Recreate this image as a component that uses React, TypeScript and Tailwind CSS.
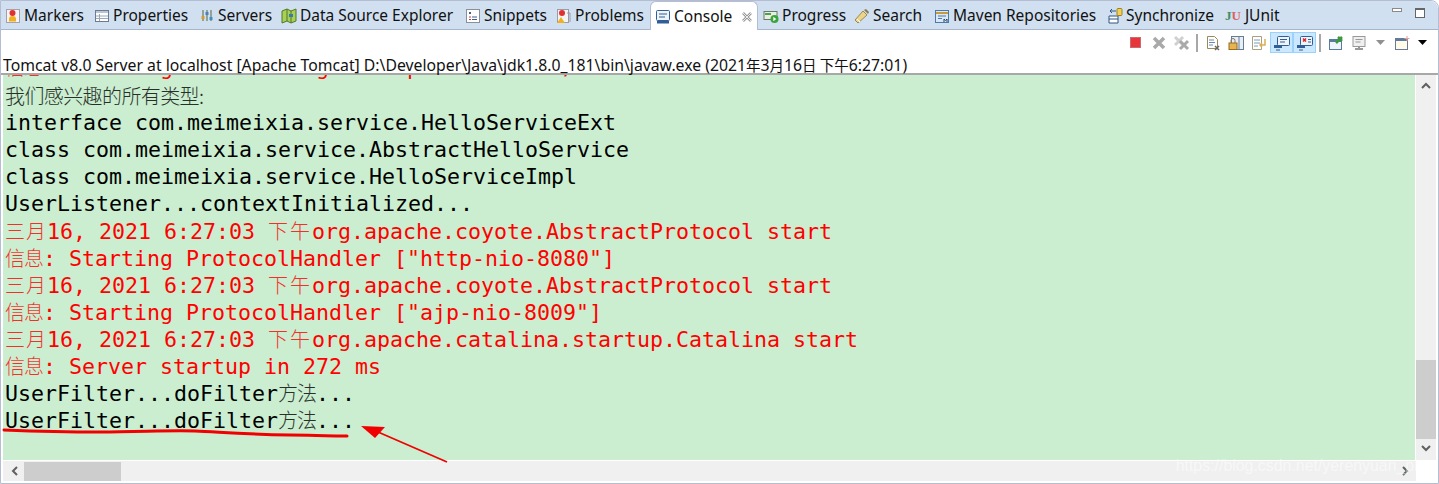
import React from "react";

const Ic = ({ children, w = 16 }: { children: React.ReactNode; w?: number }) => (
  <svg width={w} height="16" viewBox={`0 0 ${w} 16`} className="shrink-0">{children}</svg>
);

const icons: Record<string, React.ReactNode> = {
  markers: <Ic><rect x="1.5" y="1.5" width="13" height="13" fill="#f4f4f4" stroke="#a8a0a8"/><circle cx="7.500" cy="5" r="3" fill="#e03030"/><path d="M4 13.500v-2.500a3.500 3 0 017 0v2.500z" fill="#f0b020"/></Ic>,
  properties: <Ic><rect x="1.5" y="2.5" width="13" height="11" fill="#fff" stroke="#6d7a92"/><path d="M2 3h12v2H2z" fill="#b9c6d8"/><path d="M5.500 6v7M2 8h12M2 10.500h12" stroke="#9aa6ba"/></Ic>,
  servers: <Ic><path d="M4 2v11M8 2v11M12 2v11" stroke="#6b7a5c" strokeWidth="1.200"/><rect x="2.500" y="8" width="3" height="3" fill="#d89a2a"/><rect x="6.500" y="4" width="3" height="3" fill="#4a80c0"/><rect x="10.500" y="9" width="3" height="3" fill="#3d8fc0"/></Ic>,
  dse: <Ic><path d="M1 3l5-2 4 2 5-2v12l-5 2-4-2-5 2z" fill="#a6d155" stroke="#55752c"/><path d="M6 1v12M10 3v12" stroke="#55752c"/><rect x="8" y="6" width="4" height="3" fill="#3a78b8"/></Ic>,
  snippets: <Ic><rect x="1.5" y="1.5" width="13" height="13" fill="#fff" stroke="#8a9098"/><path d="M4 4h2v2H4z" fill="#406090"/><path d="M7 9h5M7 11.500h5" stroke="#406090"/><path d="M4 9h2M4 11.500h2" stroke="#c04040"/></Ic>,
  problems: <Ic><rect x="1.5" y="1.5" width="11" height="13" fill="#f3f3f3" stroke="#9a9aa8"/><circle cx="6" cy="5" r="3" fill="#e03030"/><path d="M1 15l4-6 4 6z" fill="#f0b020"/><path d="M11 5h3v9" stroke="#9a9aa8" fill="none"/></Ic>,
  console: <Ic><rect x="1.5" y="1.5" width="13" height="10" rx="1" fill="#eef4fa" stroke="#2f5f96"/><path d="M4 5h8M4 8h6" stroke="#2f5f96"/><rect x="2" y="12" width="12" height="2.500" fill="#2f5f96"/></Ic>,
  progress: <Ic><rect x="1" y="3.5" width="13" height="8" fill="#e8eee0" stroke="#6a7a6a"/><rect x="2" y="5" width="6" height="2" fill="#50a050"/><circle cx="11.500" cy="11" r="4" fill="#3aa53a"/><path d="M10.300 8.800l3 2.200-3 2.200z" fill="#fff"/></Ic>,
  search: <Ic><path d="M1 12l8-9 4 4-9 8z" fill="#ecd58a" stroke="#9a8a50"/><path d="M10 2l4 4 1-2-3-3z" fill="#8a7a50"/><path d="M3 11l3 3" stroke="#fff"/></Ic>,
  maven: <Ic><rect x="1.5" y="2.5" width="13" height="12" fill="#d9e8f4" stroke="#4d7aa8"/><path d="M2 5h12" stroke="#c89a3a" strokeWidth="2"/><path d="M4 8h8M4 10.500h4" stroke="#4d7aa8"/><path d="M10 14v-3l1.500 1.500L13 11v3" stroke="#23456b" fill="none"/></Ic>,
  sync: <Ic><path d="M2 8h9v7H2zM2 11h9" fill="#fff" stroke="#2f557f"/><path d="M9 3H3M5 1L3 3l2 2" stroke="#2f557f" fill="none"/><rect x="10" y="0.500" width="5" height="7" rx="1" fill="#f2cf55" stroke="#a08020"/></Ic>,
};

const tabs: [string, string, number][] = [
  ["Markers", "markers", 89],
  ["Properties", "properties", 105],
  ["Servers", "servers", 82],
  ["Data Source Explorer", "dse", 184],
  ["Snippets", "snippets", 91],
  ["Problems", "problems", 95],
];
const tabs2: [string, string, number][] = [
  ["Progress", "progress", 91],
  ["Search", "search", 80],
  ["Maven Repositories", "maven", 173],
  ["Synchronize", "sync", 118],
];

const Tab = ({ t }: { t: [string, string, number] }) => (
  <div className="flex items-center gap-[3px] h-[29px] pt-[1px]" style={{ width: t[2] }}>
    {icons[t[1]]}
    <span className="whitespace-nowrap">{t[0]}</span>
  </div>
);

const Tool = ({ children, on, narrow }: { children: React.ReactNode; on?: boolean; narrow?: boolean }) => (
  <div className={`${narrow ? "w-[21px]" : "w-[23px]"} h-[21px] flex items-center justify-center ${on ? "bg-[#cce8ff] border border-[#99d1ff]" : ""}`}>{children}</div>
);
const Sep = () => <div className="w-[2px] h-[18px] bg-[#a8a8a8] mx-[3px]" />;

const Cjk = ({ children, className }: { children: React.ReactNode; className: string }) => (
  <span className={`[font-family:'Noto_Sans_CJK_SC',sans-serif] font-light text-[20px] opacity-80 ${className}`}>{children}</span>
);
const Sanyue = () => <Cjk className="tracking-[1px]">三月</Cjk>;
const Xiawu = () => <Cjk className="tracking-[2px]">下午</Cjk>;
const Xinxi = () => <Cjk className="tracking-[-1px]">信息</Cjk>;
const Fangfa = () => <Cjk className="tracking-[-1px]">方法</Cjk>;

const L = ({ children, red }: { children: React.ReactNode; red?: boolean }) => (
  <div className={`h-[27px] leading-[27px] whitespace-pre ${red ? "text-[#ff0000]" : "text-black"}`}>{children}</div>
);

export default function App() {
  return (
    <div className="relative w-[1439px] h-[484px] overflow-hidden bg-white [font-family:'Noto_Sans',sans-serif] text-[15.500px] text-[#111]">
      <div className="h-[484px] flex flex-col rounded-tr-[8px] border border-[#b4bdd2]">
        <div className="relative h-[29px] shrink-0 bg-[#d1e0f0] border-b border-[#a8b6cc] flex items-start pl-[4px] rounded-tr-[8px]">
          {tabs.map((t) => <Tab key={t[0]} t={t} />)}
          <div className="w-[108px] h-[29px] -ml-[1px] mr-[5px] pt-[1px] bg-white rounded-t-[6px] border border-b-0 border-[#b4bdd2] flex items-center pl-[4px] gap-[3px]">
            {icons.console}
            <span>Console</span>
            <svg width="12" height="12" viewBox="0 0 12 12" className="ml-[6px]"><path d="M2 2l8 8M10 2l-8 8" stroke="#9a9a9a" strokeWidth="2.500" fill="none"/><path d="M2 2l8 8M10 2l-8 8" stroke="#fff" strokeWidth="0.800"/></svg>
          </div>
          {tabs2.map((t) => <Tab key={t[0]} t={t} />)}
          <div className="flex items-center gap-[4px] h-[29px] pt-[1px] w-[100px]">
            <span className="[font-family:'Liberation_Serif',serif] font-bold text-[13px]"><span className="text-[#3f8f5f]">J</span><span className="text-[#e06060]">U</span></span>
            <span>JUnit</span>
          </div>
          <div className="ml-auto flex items-center gap-[13px] h-[24px] pr-[13px]">
            <div className="w-[10px] h-[4px] -mt-[6px] border border-[#8a8a8a] bg-white" />
            <div className="w-[10px] h-[10px] border border-[#666] border-t-2 bg-white" />
          </div>
        </div>

        <div className="h-[43px] shrink-0 relative flex flex-col">
          <div className="flex items-center justify-end h-[21px] mt-[2px] pr-[5px]">
            <Tool><div className="w-[11px] h-[11px] bg-[#e8353c] border border-[#c86a70]" /></Tool>
            <Tool><svg width="14" height="14" viewBox="0 0 14 14"><path d="M2 2l10 10M12 2L2 12" stroke="#a9a9a9" strokeWidth="3.500"/></svg></Tool>
            <Tool><svg width="16" height="16" viewBox="0 0 16 16"><path d="M1 2l8 8M9 2l-8 8" stroke="#d0d0d0" strokeWidth="3"/><path d="M6 6l8 8M14 6l-8 8" stroke="#a9a9a9" strokeWidth="3"/></svg></Tool>
            <Sep />
            <Tool><svg width="16" height="16" viewBox="0 0 16 16"><path d="M2.500 1.500h7l3 3v9h-10z" fill="#fff" stroke="#9a8a5a"/><path d="M4 5h5M4 7.500h6M4 10h4" stroke="#6a8ab0"/><path d="M10 11l4 4M14 11l-4 4" stroke="#666" strokeWidth="1.500"/></svg></Tool>
            <Tool><svg width="16" height="16" viewBox="0 0 16 16"><rect x="3.500" y="1.500" width="12" height="13" fill="#e6eef6" stroke="#6a7a92"/><path d="M11 2v12" stroke="#6a7a92"/><rect x="1" y="8" width="8" height="6.500" fill="#e8b450" stroke="#9a6a20"/><path d="M3 8V5.500a2 2 0 014 0V8" fill="none" stroke="#8a7a60"/></svg></Tool>
            <Tool><svg width="16" height="16" viewBox="0 0 16 16"><path d="M1.500 1.500h9v13h-9z" fill="#fff" stroke="#a8a080"/><path d="M3 5h6M3 8h6M3 11h4" stroke="#7a9aba"/><path d="M14 4v6H9M11 8l-2 2 2 2" stroke="#d8b050" strokeWidth="1.500" fill="none"/></svg></Tool>
            <Tool on><svg width="17" height="16" viewBox="0 0 17 16"><rect x="4.500" y="1.500" width="12" height="9" rx="1" fill="#eef4fa" stroke="#2f5f96"/><path d="M7 4.500h7M7 7h5" stroke="#2f5f96"/><rect x="1" y="10" width="8" height="3" fill="#2f5f96"/><path d="M3 15h4" stroke="#2f5f96"/></svg></Tool>
            <Tool on><svg width="17" height="16" viewBox="0 0 17 16"><rect x="4.500" y="1.500" width="12" height="9" rx="1" fill="#eef4fa" stroke="#2f5f96"/><path d="M7 3.500l3 3M10 3.500l-3 3" stroke="#e02020" strokeWidth="1.500"/><path d="M12 4.500h3M12 7h3" stroke="#2f5f96"/><rect x="1" y="10" width="8" height="3" fill="#2f5f96"/><path d="M3 15h4" stroke="#2f5f96"/></svg></Tool>
            <Sep />
            <Tool><svg width="16" height="16" viewBox="0 0 16 16"><rect x="1.500" y="4.500" width="12" height="10" fill="#eef4fa" stroke="#5a7aa0"/><path d="M2 5h11v2H2z" fill="#5a7aa0"/><path d="M8 8l6-6M10 2l4 4" stroke="#3a9a3a" strokeWidth="2.500"/></svg></Tool>
            <Tool><svg width="14" height="16" viewBox="0 0 14 16"><rect x="1" y="1.500" width="12" height="10" fill="#f0f0f0" stroke="#999"/><path d="M3.500 4.500h7M3.500 7h5" stroke="#999"/><path d="M3 14h8M7 11v3" stroke="#999" strokeWidth="2"/></svg></Tool>
            <Tool narrow><svg width="9" height="5" viewBox="0 0 9 5"><path d="M0 0h9L4.500 5z" fill="#909090"/></svg></Tool>
            <Tool narrow><svg width="16" height="16" viewBox="0 0 16 16"><rect x="1.500" y="3.500" width="12" height="11" fill="#fffbe8" stroke="#6a7a92"/><path d="M2 4h11v2H2z" fill="#5a7aa0"/><path d="M13 1v5M10.500 3.500h5" stroke="#e8a090"/></svg></Tool>
            <Tool narrow><svg width="9" height="5" viewBox="0 0 9 5"><path d="M0 0h9L4.500 5z" fill="#000"/></svg></Tool>
          </div>
          <div className="absolute left-[2px] top-[25px] h-[20px] leading-[20px] text-[15.770px] whitespace-nowrap text-[#111]">
            Tomcat v8.0 Server at localhost [Apache Tomcat] D:\Developer\Java\jdk1.8.0_181\bin\javaw.exe (2021<span className="[font-family:'Noto_Sans_CJK_SC',sans-serif] text-[14.500px]">年</span>3<span className="[font-family:'Noto_Sans_CJK_SC',sans-serif] text-[14.500px]">月</span>16<span className="[font-family:'Noto_Sans_CJK_SC',sans-serif] text-[14.500px]">日 下午</span>6:27:01)
          </div>
        </div>

        <div className="flex-1 min-h-0 flex flex-col border-t-2 border-[#a8a8a8] pl-[2px] pr-[2px] pb-[1px]">
          <div className="flex-none flex">
            <div className="flex-1 min-w-0 h-[385px] bg-[#cbeed0] overflow-hidden pl-[2px] [font-family:'DejaVu_Sans_Mono',monospace] text-[21.600px]">
              <div className="-mt-[22px] mb-[2px]">
                <L red><Xinxi />: Starting Servlet Engine: Apache Tomcat/8.0.47</L>
              </div>
              <L><Cjk className="tracking-[-0.600px]">我们感兴趣的所有类型:</Cjk></L>
              <L>interface com.meimeixia.service.HelloServiceExt</L>
              <L>class com.meimeixia.service.AbstractHelloService</L>
              <L>class com.meimeixia.service.HelloServiceImpl</L>
              <L>UserListener...contextInitialized...</L>
              <L red><Sanyue />16, 2021 6:27:03 <Xiawu />org.apache.coyote.AbstractProtocol start</L>
              <L red><Xinxi />: Starting ProtocolHandler ["http-nio-8080"]</L>
              <L red><Sanyue />16, 2021 6:27:03 <Xiawu />org.apache.coyote.AbstractProtocol start</L>
              <L red><Xinxi />: Starting ProtocolHandler ["ajp-nio-8009"]</L>
              <L red><Sanyue />16, 2021 6:27:03 <Xiawu />org.apache.catalina.startup.Catalina start</L>
              <L red><Xinxi />: Server startup in 272 ms</L>
              <L>UserFilter...doFilter<Fangfa />...</L>
              <L>UserFilter...doFilter<Fangfa />...</L>
            </div>
            <div className="w-[20px] ml-[1px] h-[385px] bg-[#f0f0f0] flex flex-col items-center justify-between">
              <svg width="10" height="26" viewBox="0 0 10 26"><path d="M1 13l4-4 4 4" fill="none" stroke="#606060" strokeWidth="2"/></svg>
              <div className="flex-1 w-full flex flex-col justify-end">
                <div className="h-[79px] w-full bg-[#cdcdcd]" />
              </div>
              <svg width="10" height="21" viewBox="0 0 10 21"><path d="M1 7l4 4 4-4" fill="none" stroke="#606060" strokeWidth="2"/></svg>
            </div>
          </div>
          <div className="h-[20px] mt-[1px] mr-[20px] shrink-0 bg-[#f0f0f0] flex items-center">
            <svg width="21" height="20" viewBox="0 0 21 20" className="shrink-0"><path d="M14 6l-4 4 4 4" fill="none" stroke="#606060" strokeWidth="2"/></svg>
            <div className="w-[97px] h-[19px] bg-[#cdcdcd]" />
            <svg width="21" height="20" viewBox="0 0 21 20" className="ml-auto shrink-0"><path d="M8 6l4 4-4 4" fill="none" stroke="#606060" strokeWidth="2"/></svg>
          </div>
        </div>
      </div>

      <svg width="1439" height="484" viewBox="0 0 1439 484" className="absolute left-0 top-0 pointer-events-none">
        <path d="M4 430C30 431 60 432 100 432S170 430 195 431 240 434 290 435 330 436 347 436" fill="none" stroke="#f00000" strokeWidth="3" strokeLinecap="round"/>
        <path d="M447 462L378 432" stroke="#f00000" strokeWidth="1.800"/>
        <path d="M361 426L385 427 375 438z" fill="#f00000"/>
      </svg>
      <div className="absolute right-[8px] top-[456px] text-[15.900px] leading-[20px] whitespace-nowrap text-white/50 [font-family:'Liberation_Sans',sans-serif]">https://blog.csdn.net/yerenyuan_pku</div>
    </div>
  );
}
